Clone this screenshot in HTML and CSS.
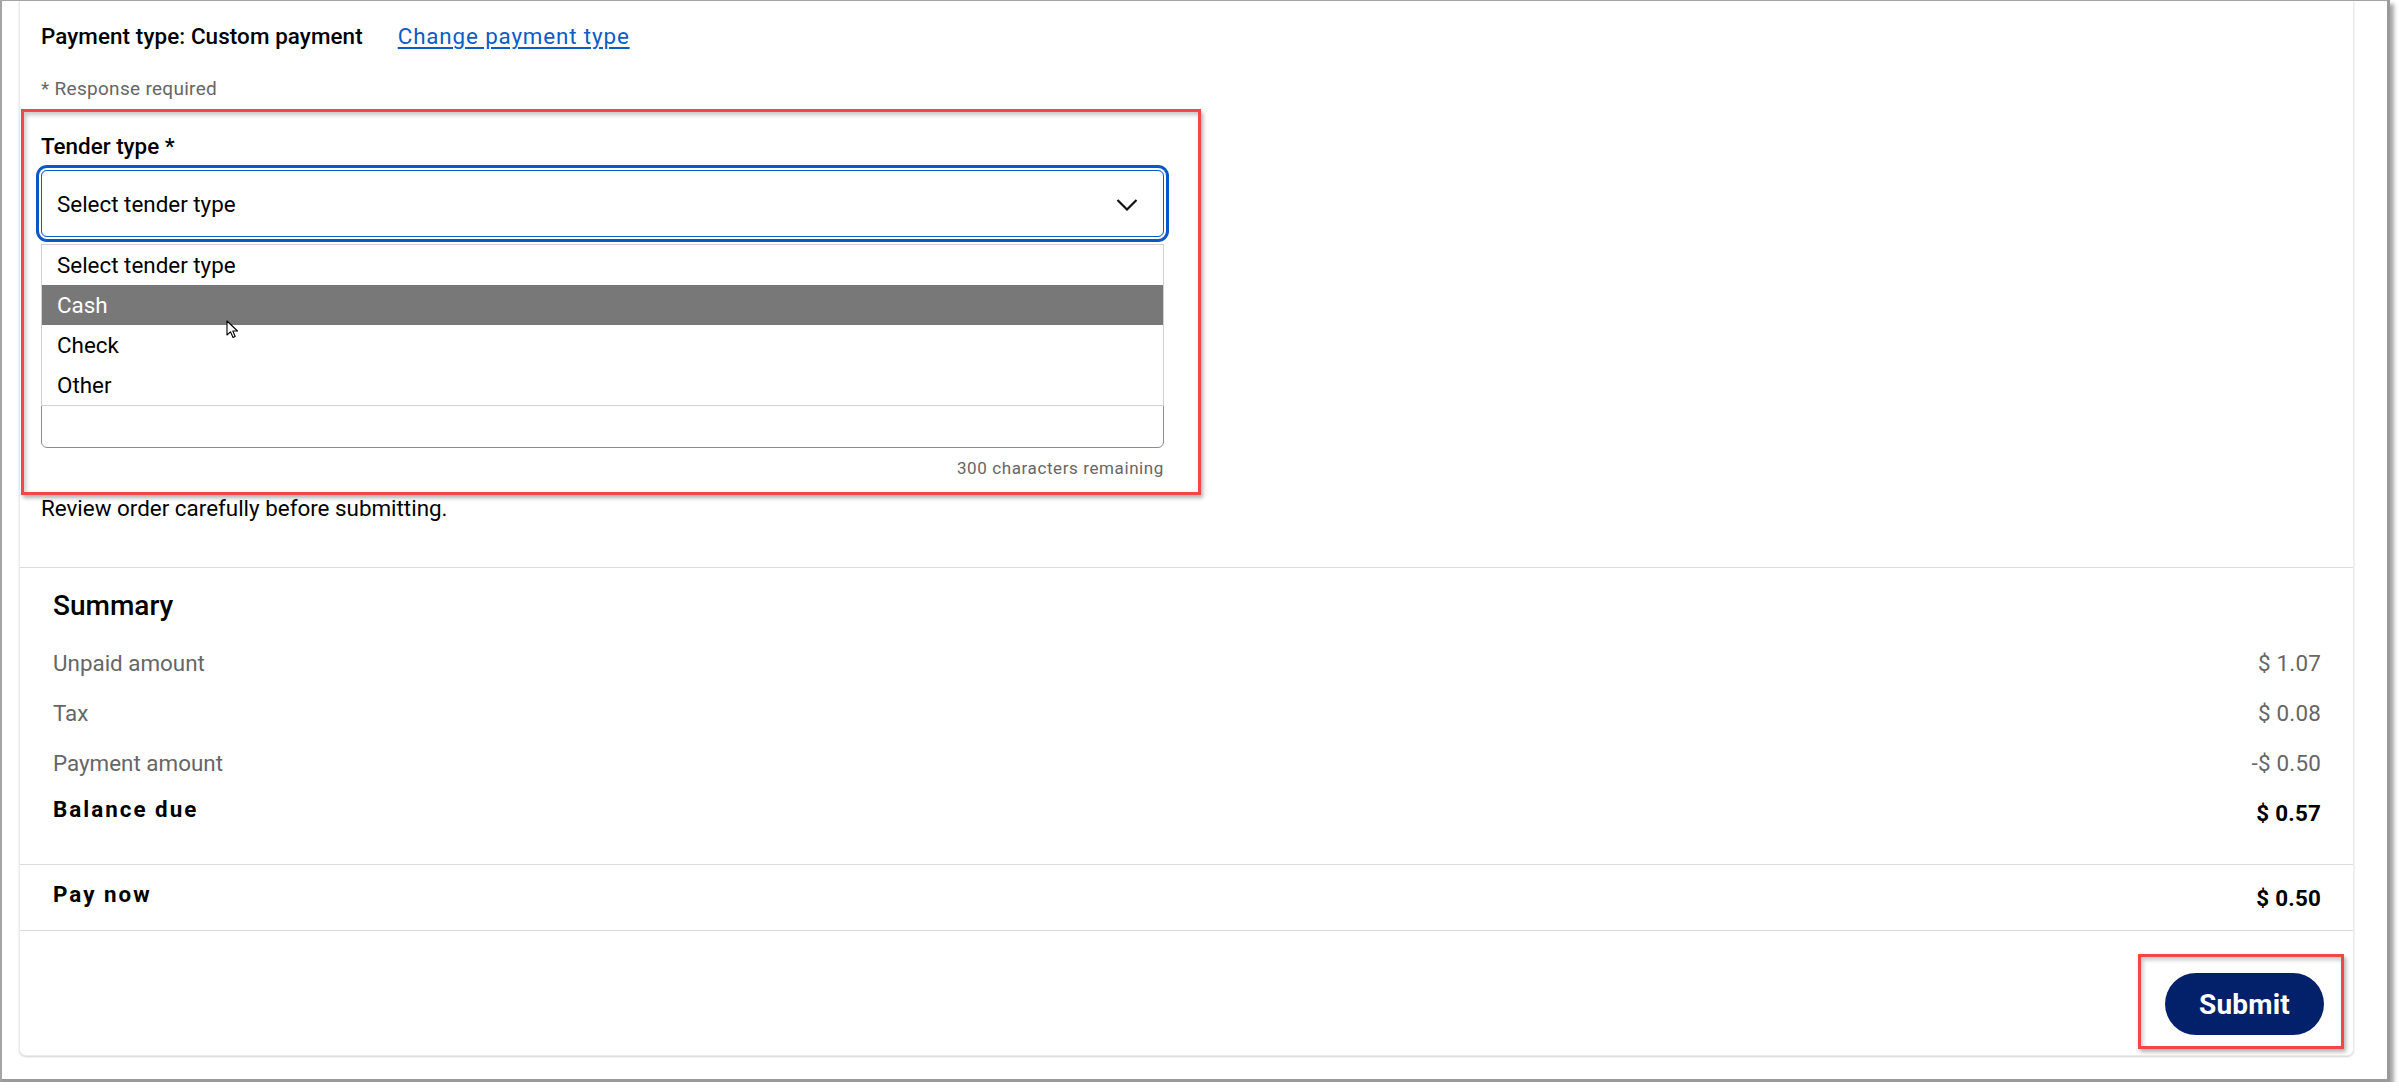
FILE: index.html
```html
<!DOCTYPE html>
<html lang="en">
<head>
<meta charset="utf-8">
<title>Payment</title>
<link rel="stylesheet" href="styles.css">
</head>
<body>
<div class="frame">
  <div class="card">
    <section class="form">
      <div class="head-row">
        <span class="ptype">Payment type: Custom payment</span>
        <a class="change" href="#">Change payment type</a>
      </div>
      <p class="required">* Response required</p>
      <label class="field-label">Tender type *</label>
      <div class="select-wrap">
        <div class="select">
          <span>Select tender type</span>
          <svg class="chev" width="22" height="12" viewBox="0 0 22 12"><polyline points="1.5,1 11,10.5 20.5,1" fill="none" stroke="#111" stroke-width="2.2"/></svg>
        </div>
        <ul class="options">
          <li>Select tender type</li>
          <li class="hl">Cash</li>
          <li>Check</li>
          <li>Other</li>
        </ul>
        <svg class="cursor" width="14" height="20" viewBox="0 0 14 20"><path d="M1 1 L1 15 L4.5 11.8 L7 17.5 L9.2 16.5 L6.8 11 L11.5 11 Z" fill="#fff" stroke="#000" stroke-width="1.1" stroke-linejoin="round"/></svg>
      </div>
      <div class="textarea"></div>
      <div class="counter">300 characters remaining</div>
      <p class="review">Review order carefully before submitting.</p>
    </section>
    <section class="summary">
      <h2>Summary</h2>
      <div class="row"><span>Unpaid amount</span><span class="val">$ 1.07</span></div>
      <div class="row"><span>Tax</span><span class="val">$ 0.08</span></div>
      <div class="row"><span>Payment amount</span><span class="val">-$ 0.50</span></div>
      <div class="row strong"><span class="lbl">Balance due</span><span class="val">$ 0.57</span></div>
    </section>
    <section class="paynow">
      <div class="row strong"><span class="lbl">Pay now</span><span class="val">$ 0.50</span></div>
    </section>
    <section class="actions">
      <button class="submit">Submit</button>
    </section>
  </div>
  <div class="annot annot-form"></div>
  <div class="annot annot-submit"></div>
</div>
</body>
</html>
```
FILE: styles.css
```css
* { box-sizing: border-box; }
html, body { margin: 0; padding: 0; background: #fff; }
body { font-family: Roboto, "Liberation Sans", Arial, sans-serif; color: #000; }

.frame {
  position: relative;
  width: 2390px;
  height: 1082px;
  border-left: 2px solid #a4a4a4;
  border-top: 1px solid #a4a4a4;
  border-right: 3px solid #9a9a9a;
  border-bottom: 3px solid #9a9a9a;
  box-shadow: 4px 4px 4px rgba(0,0,0,0.35);
  background: #fff;
  overflow: hidden;
}

.card {
  margin-left: 17px;
  width: 2335px;
  border: 1px solid #ececec;
  border-top: none;
  border-radius: 0 0 7px 7px;
  box-shadow: 0 1px 2px rgba(0,0,0,0.18);
  background: #fff;
}

.form { padding: 20px 21px 44px 21px; }

.head-row {
  display: flex;
  align-items: baseline;
  gap: 35px;
  font-size: 22.4px;
  line-height: 30px;
}
.ptype { font-weight: 500; letter-spacing: 0.1px; }
.change { color: #0b5cc4; text-decoration: underline; text-underline-offset: 3px; letter-spacing: 0.85px; }

.required {
  margin: 26px 0 0;
  font-size: 19px;
  line-height: 24px;
  letter-spacing: 0.3px;
  color: #666;
}

.field-label {
  display: block;
  margin-top: 30px;
  font-size: 22.4px;
  line-height: 30px;
  font-weight: 500;
}

.select-wrap { position: relative; width: 1123px; margin-top: 9px; }

.select {
  height: 67px;
  border: 1px solid #0b5bc8;
  border-radius: 6px;
  box-shadow: 0 0 0 2px #fff, 0 0 0 5px #0a58c6;
  display: flex;
  align-items: center;
  justify-content: space-between;
  padding: 0 25px 0 15px;
  font-size: 22.4px;
  line-height: 30px;
}
.chev { display: block; margin-top: 2px; }

.options {
  position: absolute;
  left: 0;
  top: 74px;
  width: 1123px;
  margin: 0;
  padding: 0;
  list-style: none;
  border: 1px solid #d2d2d2;
  background: #fff;
  z-index: 2;
}
.options li {
  height: 40px;
  line-height: 40px;
  padding-left: 15px;
  font-size: 22.4px;
}
.options li.hl { background: #787878; color: #fff; }

.cursor { position: absolute; left: 185px; top: 150px; z-index: 3; }

.textarea {
  margin-top: 20px;
  width: 1123px;
  height: 191px;
  border: 1px solid #8c8c8c;
  border-radius: 6px;
}

.counter {
  width: 1123px;
  margin-top: 9px;
  text-align: right;
  font-size: 17px;
  line-height: 22px;
  letter-spacing: 0.6px;
  color: #666;
}

.review {
  margin: 14px 0 0;
  font-size: 22.4px;
  line-height: 30px;
}

.summary {
  border-top: 1px solid #dcdcdc;
  padding: 20px 32px 26px 33px;
}
.summary h2 {
  margin: 0 0 14px;
  font-size: 28px;
  line-height: 36px;
  font-weight: 500;
}
.row {
  display: flex;
  justify-content: space-between;
  align-items: center;
  height: 50px;
  font-size: 22.4px;
  line-height: 30px;
  color: #666;
}
.row .val { letter-spacing: 0.2px; }
.row.strong { color: #000; font-weight: 700; }
.row.strong .lbl { letter-spacing: 2px; margin-top: -8px; }
.row.strong .val { letter-spacing: 0.2px; }

.paynow {
  border-top: 1px solid #dcdcdc;
  padding: 1px 32px 0 33px;
}
.paynow .row { height: 64px; }

.actions {
  border-top: 1px solid #dcdcdc;
  display: flex;
  justify-content: flex-end;
  padding: 42px 29px 20px 0;
}
.submit {
  width: 159px;
  height: 62px;
  border: none;
  border-radius: 31px;
  background: #03216b;
  color: #fff;
  font-family: Roboto, "Liberation Sans", Arial, sans-serif;
  font-size: 28px;
  font-weight: 700;
  letter-spacing: 0.2px;
}

.annot {
  position: absolute;
  border: 3px solid #f04848;
  box-shadow: 2px 3px 4px rgba(0,0,0,0.3), inset 2px 3px 4px rgba(0,0,0,0.22);
  z-index: 5;
  pointer-events: none;
}
.annot-form { left: 19px; top: 108px; width: 1180px; height: 386px; }
.annot-submit { left: 2136px; top: 953px; width: 206px; height: 95px; }
```
